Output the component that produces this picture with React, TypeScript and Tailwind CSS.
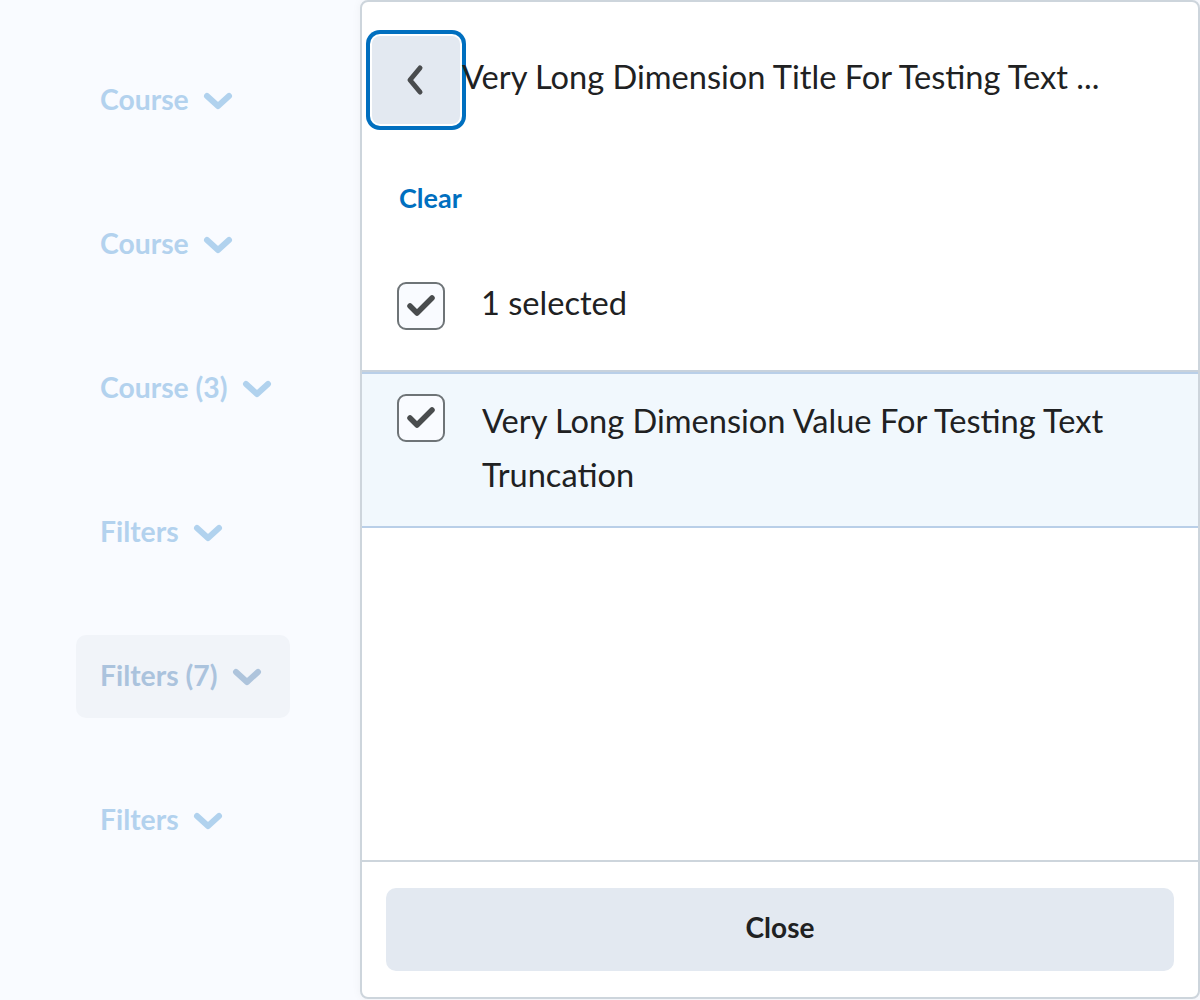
import React from "react";

const FILTER_BUTTONS = [
  { label: "Course", active: false },
  { label: "Course", active: false },
  { label: "Course (3)", active: false },
  { label: "Filters", active: false },
  { label: "Filters (7)", active: true },
  { label: "Filters", active: false },
];

function ChevronDown({ color }: { color: string }) {
  return (
    <svg width="32" height="20" viewBox="0 0 32 20" fill="none">
      <path d="M5 5 L16 15 L27 5" stroke={color} strokeWidth="6" strokeLinecap="round" strokeLinejoin="round" />
    </svg>
  );
}

function CheckBox() {
  return (
    <div className="w-[48px] h-[48px] shrink-0 rounded-[9px] border-2 border-[#6e7477] bg-[#f9fbff] flex items-center justify-center">
      <svg width="44" height="44" viewBox="0 0 44 44" fill="none">
        <path d="M11 22 L18 29 L33 14" stroke="#494c4e" strokeWidth="5.5" strokeLinecap="round" strokeLinejoin="round" />
      </svg>
    </div>
  );
}

export default function App() {
  return (
    <div className="relative w-[1200px] h-[1000px] overflow-hidden bg-[#f9fbff] font-['Lato','Noto_Sans',sans-serif]">
      {/* Filter buttons behind the dropdown */}
      <div className="flex flex-col items-start gap-[61px] pt-[59px] pl-[76px]">
        {FILTER_BUTTONS.map((b, i) => (
          <div
            key={i}
            className={
              b.active
                ? "h-[83px] pl-[24px] pr-[27px] flex items-center gap-[13px] rounded-[10px] bg-[#f1f4f9] text-[28.3px] font-bold text-[#abc3dd]"
                : "h-[83px] pl-[24px] pr-[27px] flex items-center gap-[13px] rounded-[10px] text-[28.3px] font-bold text-[#b3d2ee]"
            }
          >
            <span className="pb-[2px]">{b.label}</span>
            <ChevronDown color={b.active ? "#aec4dc" : "#b1d2ee"} />
          </div>
        ))}
      </div>

      {/* Dropdown panel */}
      <div className="absolute left-[360px] top-0 w-[840px] h-[999px] flex flex-col bg-white border-2 border-[#cdd5dc] rounded-[8px] shadow-[0_0_10px_rgba(0,0,0,0.05)]">
        <div className="flex items-center pl-[10px] pt-[34px]">
          <button className="w-[88px] h-[88px] shrink-0 rounded-[8px] bg-[#e3e9f1] ring-4 ring-[#006fbf] ring-offset-2 ring-offset-white flex items-center justify-center">
            <svg width="24" height="32" viewBox="0 0 24 32" fill="none">
              <path d="M16 4 L6 16 L16 28" stroke="#494c4e" strokeWidth="5" strokeLinecap="round" strokeLinejoin="round" />
            </svg>
          </button>
          <div className="flex-1 min-w-0 ml-[2px] pb-[6px] text-[32.6px] leading-[48px] text-[#202122] whitespace-nowrap">
            Very Long Dimension Title For Testing Text ...
          </div>
        </div>

        <div className="pl-[37px] mt-[54px] text-[27px] leading-[40px] font-bold text-[#006fbf]">Clear</div>

        <div className="flex items-start gap-[36px] pl-[35px] mt-[64px] pb-[40px] border-b-2 border-[#c8d2dc]">
          <CheckBox />
          <span className="-mt-[3px] text-[32.6px] leading-[48px] text-[#202122]">1 selected</span>
        </div>

        <div className="flex items-start gap-[37px] pl-[35px] pr-[60px] pt-[20px] pb-[24px] bg-[#f1f8fd] border-t-2 border-b-2 border-[#b9cfe8]">
          <CheckBox />
          <span className="text-[32.6px] leading-[54px] text-[#202122]">
            Very Long Dimension Value For Testing Text Truncation
          </span>
        </div>

        <div className="flex-1" />

        <div className="border-t-2 border-[#cdd5dc] px-[24px] pt-[26px] pb-[26px]">
          <button className="w-full h-[83px] pb-[5px] rounded-[10px] bg-[#e3e9f1] text-[28px] font-bold text-[#202122]">
            Close
          </button>
        </div>
      </div>
    </div>
  );
}
